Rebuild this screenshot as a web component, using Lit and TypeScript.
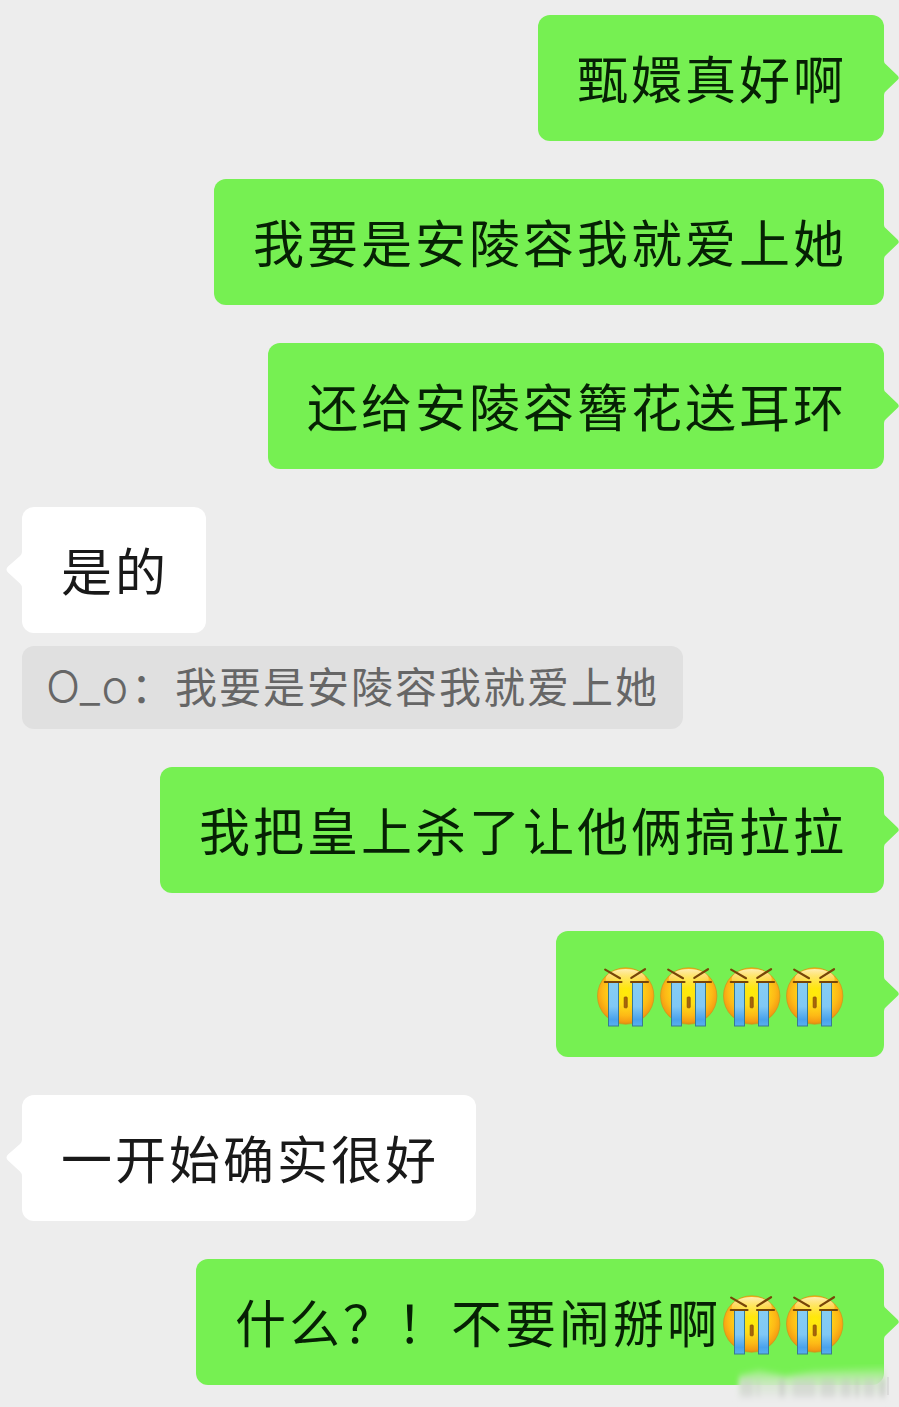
import { LitElement, html, css, svg } from "lit";
import { customElement, property } from "lit/decorators.js";

interface Message {
  side: "mine" | "theirs";
  text: string;
  cries?: number;
  quote?: { name: string; text: string };
}

const MESSAGES: Message[] = [
  { side: "mine", text: "甄嬛真好啊" },
  { side: "mine", text: "我要是安陵容我就爱上她" },
  { side: "mine", text: "还给安陵容簪花送耳环" },
  { side: "theirs", text: "是的", quote: { name: "O_o", text: "：我要是安陵容我就爱上她" } },
  { side: "mine", text: "我把皇上杀了让他俩搞拉拉" },
  { side: "mine", text: "", cries: 4 },
  { side: "theirs", text: "一开始确实很好" },
  { side: "mine", text: "什么？！不要闹掰啊", cries: 2 },
];

@customElement("cry-face")
class CryFace extends LitElement {
  static styles = css`
    :host { display: block; width: 63px; height: 64px; flex: none; }
    svg { display: block; }
  `;
  render() {
    return html`<svg width="63" height="64" viewBox="0 0 63 64">
      <defs>
        <radialGradient id="face" cx="0.5" cy="0.43" r="0.58">
          <stop offset="0" stop-color="#ffec08" />
          <stop offset="0.4" stop-color="#ffdc18" />
          <stop offset="0.72" stop-color="#fdb916" />
          <stop offset="0.9" stop-color="#f59d12" />
          <stop offset="1" stop-color="#d98a10" />
        </radialGradient>
        <linearGradient id="shine" x1="0" y1="0" x2="0" y2="1">
          <stop offset="0" stop-color="#fff8d0" stop-opacity="0.85" />
          <stop offset="1" stop-color="#fff27a" stop-opacity="0" />
        </linearGradient>
        <linearGradient id="tear" x1="0" y1="0" x2="0" y2="1">
          <stop offset="0" stop-color="#86cdf3" />
          <stop offset="0.55" stop-color="#80c8f5" />
          <stop offset="0.85" stop-color="#4aa2ec" />
          <stop offset="1" stop-color="#58b0ee" />
        </linearGradient>
      </defs>
      <circle cx="31.7" cy="32" r="28.2" fill="url(#face)" stroke="#d0921a" stroke-width="0.7" />
      <ellipse cx="31.7" cy="15" rx="20" ry="10" fill="url(#shine)" />
      ${[14.5, 38.5].map(
        (x) => svg`<rect x=${x} y="18.5" width="10" height="43.5" fill="url(#tear)" stroke="#387a91" stroke-width="1" />`
      )}
      <g fill="none" stroke="#774507" stroke-width="2.2" stroke-linecap="round">
        <path d="M11.2 5.6 26 14.2M51 5.2 37.3 13.9M10.8 18H27.5M37 18h17" />
      </g>
      <rect x="30.2" y="33" width="3" height="10.8" rx="0.7" fill="#a9640a" stroke="#865009" stroke-width="0.8" />
    </svg>`;
  }
}

@customElement("chat-message")
class ChatMessage extends LitElement {
  @property({ attribute: false }) message!: Message;

  static styles = css`
    :host { display: block; }
    .row { display: flex; flex-direction: column; align-items: flex-start; gap: 13px; }
    .row.mine { align-items: flex-end; }
    .bubble {
      position: relative;
      box-sizing: border-box;
      height: 126px;
      padding: 0 38px;
      border-radius: 12px;
      display: flex;
      align-items: center;
      background: #fff;
      color: #191919;
    }
    .mine .bubble { background: #76f052; color: #062104; }
    .text {
      font-size: 51px;
      line-height: 74px;
      letter-spacing: 3px;
      padding-bottom: 2px;
      text-indent: 1px;
      margin-right: -1px;
      white-space: nowrap;
    }
    .faces { display: flex; padding-top: 4px; }
    .tail { position: absolute; top: 45px; left: -16px; width: 17px; height: 36px; fill: #fff; }
    .mine .tail { left: auto; right: -15px; width: 16px; fill: #76f052; }
    .quote {
      box-sizing: border-box;
      height: 83px;
      padding: 0 24px 6px;
      border-radius: 12px;
      background: #e0e0e0;
      color: #666;
      display: flex;
      align-items: baseline;
      white-space: nowrap;
      font-size: 42px;
      line-height: 77px;
    }
    .name { width: 85px; font-family: Inter, sans-serif; font-weight: 350; font-size: 45px; letter-spacing: 1.5px; }
    .said { letter-spacing: 2px; }
  `;

  render() {
    const { side, text, cries = 0, quote } = this.message;
    return html`<div class="row ${side}">
      <div class="bubble">
        ${text ? html`<span class="text">${text}</span>` : null}
        ${cries
          ? html`<span class="faces">${Array.from({ length: cries }, () => html`<cry-face></cry-face>`)}</span>`
          : null}
        ${side === "mine"
          ? html`<svg class="tail" viewBox="0 0 16 36"><path d="M0 0 1 1Q1 3 3 4.5L14.5 15.5Q17 18 14.5 20L3 31Q1 32.5 1 35L0 36Z" /></svg>`
          : html`<svg class="tail" viewBox="0 0 17 36"><path d="M17 0 16 0Q16 2 14 4L2 14.5Q-1 17.5 2 20.5L14 31.5Q16 33.5 16 36L17 36Z" /></svg>`}
      </div>
      ${quote
        ? html`<div class="quote"><span class="name">${quote.name}</span><span class="said">${quote.text}</span></div>`
        : null}
    </div>`;
  }
}

@customElement("app-root")
class AppRoot extends LitElement {
  static styles = css`
    :host {
      display: block;
      position: relative;
      box-sizing: border-box;
      width: 899px;
      height: 1407px;
      overflow: hidden;
      background: #ededed;
      font-family: "Noto Sans CJK SC", sans-serif;
    }
    .thread { display: flex; flex-direction: column; gap: 38px; padding: 15px 15px 22px 22px; }
    .smudge { position: absolute; left: 725px; top: 1364px; }
  `;

  render() {
    const streaks: [number, number, string, number][] = [
      [16, 12, "#c8c8c8", 0.4], [31, 4, "#c4c4c4", 0.3], [54, 6, "#bdbdbd", 0.45],
      [68, 22, "#c8c8c8", 0.4], [96, 14, "#c2c2c2", 0.4], [116, 10, "#c4c4c4", 0.4],
      [130, 4, "#b5b5b5", 0.4], [139, 10, "#c6c6c6", 0.4], [154, 7, "#bcbcbc", 0.4],
    ];
    return html`
      <div class="thread">
        ${MESSAGES.map((m) => html`<chat-message .message=${m}></chat-message>`)}
      </div>
      <svg class="smudge" width="174" height="43" viewBox="0 0 174 43">
        <defs>
          <filter id="soft" x="-10%" y="-30%" width="120%" height="160%"><feGaussianBlur stdDeviation="2 3" /></filter>
          <linearGradient id="veil" x1="0" y1="0" x2="0" y2="1">
            <stop offset="0" stop-color="#c5f0b5" stop-opacity="0.2" />
            <stop offset="0.4" stop-color="#cdeac2" stop-opacity="0.85" />
            <stop offset="0.7" stop-color="#dde6d9" stop-opacity="0.9" />
            <stop offset="1" stop-color="#ebebeb" stop-opacity="0.9" />
          </linearGradient>
        </defs>
        <g filter="url(#soft)">
          <path d="M14 12 34 6 60 12 90 7 161 3V35H12Z" fill="url(#veil)" />
          ${streaks.map(([x, w, c, o]) => svg`<rect x=${x} y="15" width=${w} height="18" fill=${c} opacity=${o} />`)}
        </g>
        <path d="M163 13v18" stroke="#c4c4c4" stroke-width="1.5" opacity="0.5" />
      </svg>
    `;
  }
}
